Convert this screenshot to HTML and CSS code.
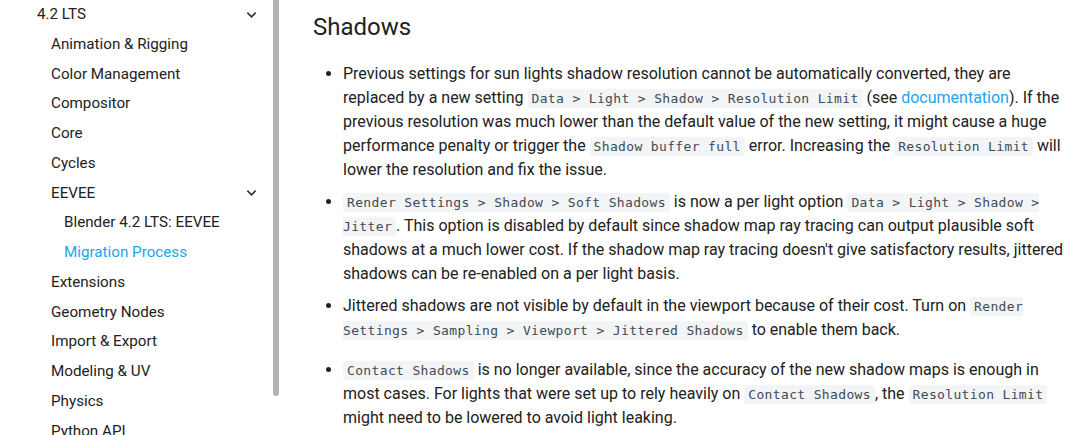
FILE: index.html
```html
<!DOCTYPE html>
<html lang="en">
<head>
  <meta charset="UTF-8">
  <title>Shadows - EEVEE Migration Process</title>
  <link rel="stylesheet" href="styles.css">
</head>
<body>

  <nav class="sidebar">
    <ul class="nav-tree">
      <li class="nav-item level-1">
        <span>4.2 LTS</span>
        <svg class="chevron" viewBox="0 0 12 8"><path d="M1.5 1.5 6 6l4.5-4.5"/></svg>
      </li>
      <li class="nav-item level-2"><span>Animation &amp; Rigging</span></li>
      <li class="nav-item level-2"><span>Color Management</span></li>
      <li class="nav-item level-2"><span>Compositor</span></li>
      <li class="nav-item level-2"><span>Core</span></li>
      <li class="nav-item level-2"><span>Cycles</span></li>
      <li class="nav-item level-2">
        <span>EEVEE</span>
        <svg class="chevron" viewBox="0 0 12 8"><path d="M1.5 1.5 6 6l4.5-4.5"/></svg>
      </li>
      <li class="nav-item level-3"><span>Blender 4.2 LTS: EEVEE</span></li>
      <li class="nav-item level-3 active"><span>Migration Process</span></li>
      <li class="nav-item level-2"><span>Extensions</span></li>
      <li class="nav-item level-2"><span>Geometry Nodes</span></li>
      <li class="nav-item level-2"><span>Import &amp; Export</span></li>
      <li class="nav-item level-2"><span>Modeling &amp; UV</span></li>
      <li class="nav-item level-2"><span>Physics</span></li>
      <li class="nav-item level-2"><span>Python API</span></li>
    </ul>
    <div class="scrollbar"></div>
  </nav>

  <main class="content">
    <h1>Shadows</h1>
    <ul class="notes">
      <li>Previous settings for sun lights shadow resolution cannot be automatically converted, they are replaced by a new setting <code>Data &gt; Light &gt; Shadow &gt; Resolution Limit</code> (see <a href="#">documentation</a>). If the previous resolution was much lower than the default value of the new setting, it might cause a huge performance penalty or trigger the <code>Shadow buffer full</code> error. Increasing the <code>Resolution Limit</code> will lower the resolution and fix the issue.</li>
      <li><code>Render Settings &gt; Shadow &gt; Soft Shadows</code> is now a per light option <code>Data &gt; Light &gt; Shadow &gt; Jitter</code>. This option is disabled by default since shadow map ray tracing can output plausible soft shadows at a much lower cost. If the shadow map ray tracing doesn't give satisfactory results, jittered shadows can be re-enabled on a per light basis.</li>
      <li>Jittered shadows are not visible by default in the viewport because of their cost. Turn on <code>Render Settings &gt; Sampling &gt; Viewport &gt; Jittered Shadows</code> to enable them back.</li>
      <li class="spaced"><code>Contact Shadows</code> is no longer available, since the accuracy of the new shadow maps is enough in most cases. For lights that were set up to rely heavily on <code>Contact Shadows</code>, the <code>Resolution Limit</code> might need to be lowered to avoid light leaking.</li>
    </ul>
  </main>

</body>
</html>
```

FILE: styles.css
```css
body {
  margin: 0;
  font-family: Roboto, 'Liberation Sans', sans-serif;
  color: #212121;
  background-color: #fff;
  display: flex;
  height: 435px;
  overflow: hidden;
}

/* left navigation */
.sidebar {
  position: relative;
  width: 281px;
  flex-shrink: 0;
  overflow: hidden;
}

.nav-tree {
  list-style: none;
  margin: 0;
  padding: 0 22px 0 0;
}

.nav-item {
  display: flex;
  align-items: center;
  justify-content: space-between;
  font-size: 15.2px;
  line-height: 29.75px;
  color: #222;
}

.level-1 {
  padding-left: 37px;
}

.level-2 {
  padding-left: 51px;
}

.level-3 {
  padding-left: 64px;
}

.nav-item.active {
  color: #1ea4ef;
}

.chevron {
  width: 11px;
  height: 8px;
  margin-right: 2px;
  fill: none;
  stroke: #333;
  stroke-width: 1.8;
}

.scrollbar {
  position: absolute;
  top: 0;
  left: 273px;
  width: 6px;
  height: 396px;
  background-color: #b2b2b2;
  border-radius: 0 0 3px 3px;
}

/* article */
.content {
  padding: 0 16px 0 32px;
  width: 754px;
}

h1 {
  font-size: 24px;
  font-weight: 400;
  line-height: 28.8px;
  margin: 13px 0 20px;
  color: #222;
}

.notes {
  margin: 0;
  padding-left: 30px;
  font-size: 16px;
  line-height: 24px;
}

.notes li {
  margin-bottom: 8px;
}

.notes li.spaced {
  margin-top: 16px;
}

code {
  font-family: 'DejaVu Sans Mono', monospace;
  font-size: 13px;
  line-height: 1;
  letter-spacing: 0.35px;
  color: #3f4a55;
  background-color: #f3f4f5;
  padding: 2px 4px;
  border-radius: 3px;
}

a {
  color: #1ea4ef;
  text-decoration: none;
}
```
